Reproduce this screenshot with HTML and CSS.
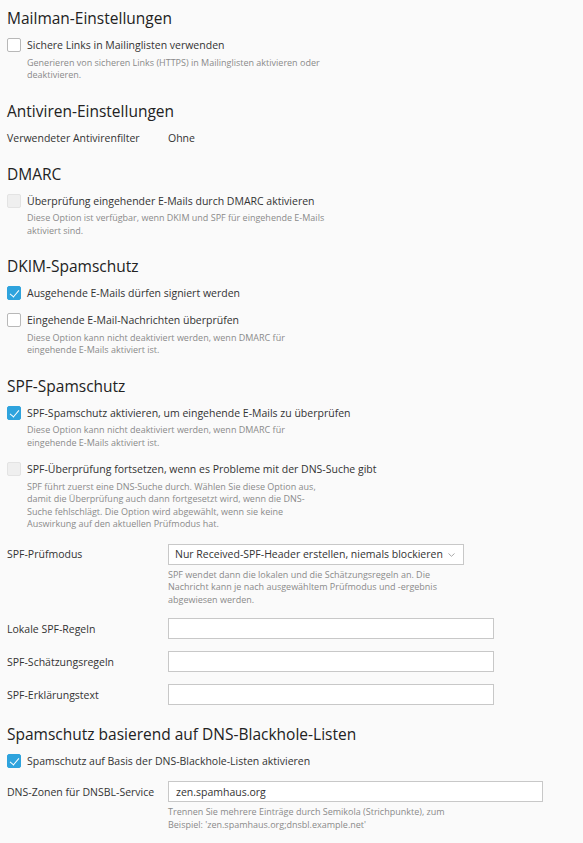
FILE: index.html
```html
<!DOCTYPE html>
<html lang="de">
<head>
    <meta charset="UTF-8">
    <meta name="viewport" content="width=device-width, initial-scale=1.0">
    <title>Mail-Servereinstellungen</title>
    <link rel="stylesheet" href="styles.css">
</head>
<body>
    <div class="page">
        <section class="section">
            <h2>Mailman-Einstellungen</h2>
            <div class="option">
                <label class="check"><input type="checkbox"><span>Sichere Links in Mailinglisten verwenden</span></label>
                <p class="hint">Generieren von sicheren Links (HTTPS) in Mailinglisten aktivieren oder deaktivieren.</p>
            </div>
        </section>

        <section class="section">
            <h2>Antiviren-Einstellungen</h2>
            <div class="field info">
                <span class="field-label">Verwendeter Antivirenfilter</span>
                <span>Ohne</span>
            </div>
        </section>

        <section class="section">
            <h2>DMARC</h2>
            <div class="option">
                <label class="check"><input type="checkbox" disabled><span>Überprüfung eingehender E-Mails durch DMARC aktivieren</span></label>
                <p class="hint">Diese Option ist verfügbar, wenn DKIM und SPF für eingehende E-Mails aktiviert sind.</p>
            </div>
        </section>

        <section class="section">
            <h2>DKIM-Spamschutz</h2>
            <div class="option">
                <label class="check"><input type="checkbox" checked><span>Ausgehende E-Mails dürfen signiert werden</span></label>
            </div>
            <div class="option">
                <label class="check"><input type="checkbox"><span>Eingehende E-Mail-Nachrichten überprüfen</span></label>
                <p class="hint">Diese Option kann nicht deaktiviert werden, wenn DMARC für eingehende E-Mails aktiviert ist.</p>
            </div>
        </section>

        <section class="section">
            <h2>SPF-Spamschutz</h2>
            <div class="option">
                <label class="check"><input type="checkbox" checked><span>SPF-Spamschutz aktivieren, um eingehende E-Mails zu überprüfen</span></label>
                <p class="hint">Diese Option kann nicht deaktiviert werden, wenn DMARC für eingehende E-Mails aktiviert ist.</p>
            </div>
            <div class="option">
                <label class="check"><input type="checkbox" disabled><span>SPF-Überprüfung fortsetzen, wenn es Probleme mit der DNS-Suche gibt</span></label>
                <p class="hint">SPF führt zuerst eine DNS-Suche durch. Wählen Sie diese Option aus, damit die Überprüfung auch dann fortgesetzt wird, wenn die DNS-Suche fehlschlägt. Die Option wird abgewählt, wenn sie keine Auswirkung auf den aktuellen Prüfmodus hat.</p>
            </div>
            <div class="field">
                <label class="field-label" for="spfMode">SPF-Prüfmodus</label>
                <div class="control">
                    <div class="select-wrap">
                        <select id="spfMode">
                            <option>Nur Received-SPF-Header erstellen, niemals blockieren</option>
                        </select>
                        <svg class="chevron" width="7" height="4" viewBox="0 0 7 4"><path d="M0.5 0.5 L3.5 3.3 L6.5 0.5" fill="none" stroke="#a9a9a9" stroke-width="1"/></svg>
                    </div>
                    <p class="hint">SPF wendet dann die lokalen und die Schätzungsregeln an. Die Nachricht kann je nach ausgewähltem Prüfmodus und -ergebnis abgewiesen werden.</p>
                </div>
            </div>
            <div class="field">
                <label class="field-label" for="spfLocal">Lokale SPF-Regeln</label>
                <div class="control"><input type="text" id="spfLocal"></div>
            </div>
            <div class="field">
                <label class="field-label" for="spfGuess">SPF-Schätzungsregeln</label>
                <div class="control"><input type="text" id="spfGuess"></div>
            </div>
            <div class="field">
                <label class="field-label" for="spfExp">SPF-Erklärungstext</label>
                <div class="control"><input type="text" id="spfExp"></div>
            </div>
        </section>

        <section class="section">
            <h2>Spamschutz basierend auf DNS-Blackhole-Listen</h2>
            <div class="option">
                <label class="check"><input type="checkbox" checked><span>Spamschutz auf Basis der DNS-Blackhole-Listen aktivieren</span></label>
            </div>
            <div class="field">
                <label class="field-label" for="dnsZones">DNS-Zonen für DNSBL-Service</label>
                <div class="control wide">
                    <input type="text" id="dnsZones" value="zen.spamhaus.org">
                    <p class="hint">Trennen Sie mehrere Einträge durch Semikola (Strichpunkte), zum Beispiel: 'zen.spamhaus.org;dnsbl.example.net'</p>
                </div>
            </div>
        </section>
    </div>
</body>
</html>
```

FILE: styles.css
```css
* {
    box-sizing: border-box;
}

body {
    margin: 0;
    background-color: #fafafa;
    font-family: "Open Sans", sans-serif;
    font-size: 10.5px;
    line-height: 14px;
    color: #333;
}

.page {
    padding: 8px 7px 0;
}

.section + .section {
    margin-top: 19px;
}

h2 {
    margin: 0 0 10px;
    font-size: 15.5px;
    line-height: 20px;
    font-weight: 400;
    color: #222;
}

.option + .option,
.option + .field {
    margin-top: 13px;
}

.field + .field {
    margin-top: 12px;
}

.check {
    display: flex;
    align-items: center;
    gap: 6px;
}

.check input {
    appearance: none;
    -webkit-appearance: none;
    position: relative;
    flex: none;
    width: 14px;
    height: 14px;
    margin: 0;
    border: 1px solid #b8b8b8;
    border-radius: 2px;
    background-color: #fff;
}

.check input:checked {
    background-color: #2ea3dd;
    border-color: #2ea3dd;
}

.check input:checked::after {
    content: "";
    position: absolute;
    left: 4px;
    top: 1px;
    width: 4px;
    height: 8px;
    border: solid #fff;
    border-width: 0 1.6px 1.6px 0;
    transform: rotate(40deg);
}

.check input:disabled {
    background-color: #efefef;
    border-color: #e3e3e3;
}

.hint {
    margin: 4.5px 0 0 20px;
    max-width: 302px;
    font-size: 9px;
    line-height: 12.5px;
    color: #8a8a8a;
}

.field {
    display: grid;
    grid-template-columns: 161px 1fr;
}

.field-label {
    padding-top: 3.5px;
}

.field.info .field-label {
    padding-top: 0;
}

.control input,
.control select {
    display: block;
    height: 21px;
    margin: 0;
    border: 1px solid #c8c8c8;
    border-radius: 0;
    background-color: #fff;
    font-family: inherit;
    font-size: 10.5px;
    color: #333;
}

.control input {
    width: 326px;
    padding: 0 7px;
}

.control.wide input {
    width: 375px;
}

.select-wrap {
    position: relative;
    width: 296px;
}

.control select {
    appearance: none;
    -webkit-appearance: none;
    width: 100%;
    padding: 0 20px 0 6px;
}

.chevron {
    position: absolute;
    right: 9px;
    top: 9px;
}

.control .hint {
    margin: 4px 0 0;
    max-width: 286px;
}
```
